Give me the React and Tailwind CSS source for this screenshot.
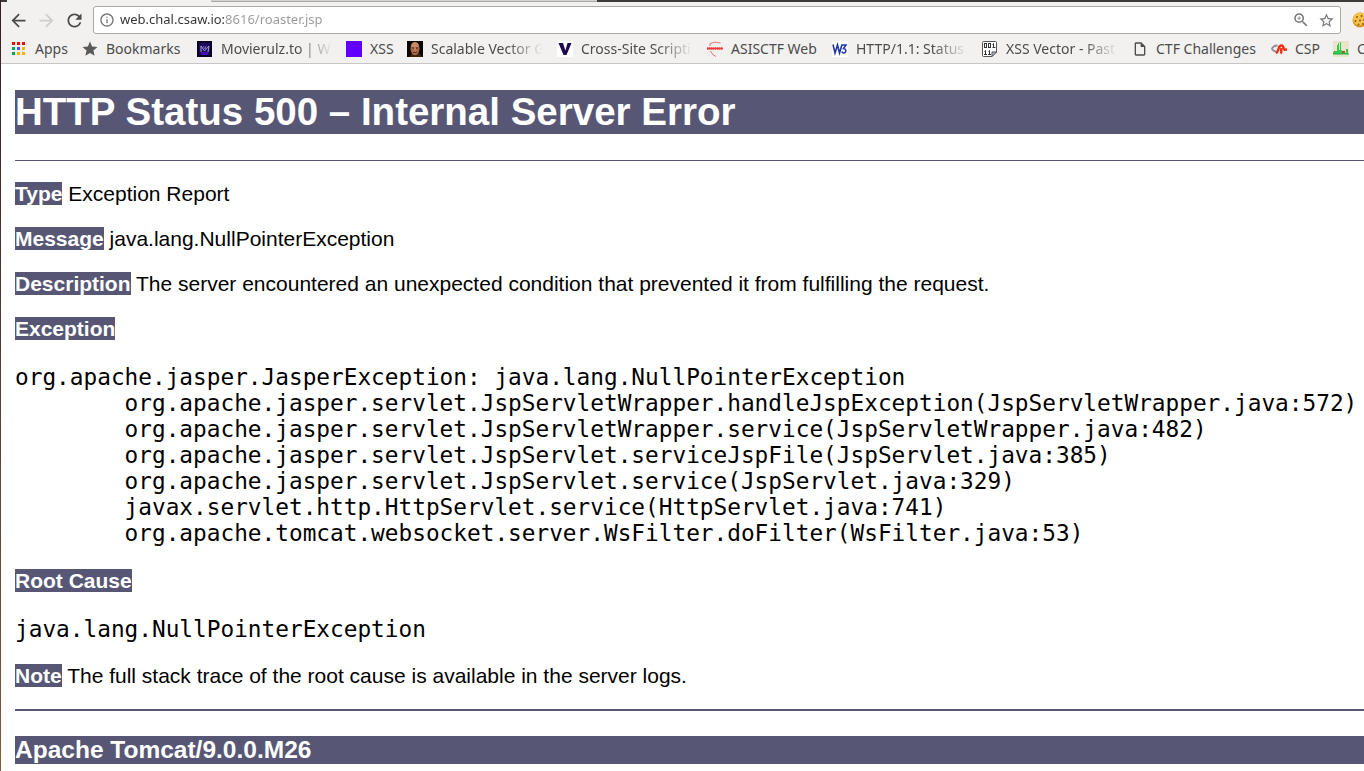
import React from "react";
import {
  MdArrowBack,
  MdArrowForward,
  MdRefresh,
  MdInfoOutline,
  MdZoomIn,
  MdStarBorder,
  MdStar,
  MdOutlineInsertDriveFile,
} from "react-icons/md";

const svg = { width: 16, height: 16, viewBox: "0 0 16 16", "aria-hidden": true };

function AppsIcon() {
  const colors = ["#f50a0a", "#f50a0a", "#f50a0a", "#0fa35a", "#4a55f0", "#f5b400", "#0fa35a", "#f5b400", "#f5b400"];
  return (
    <svg {...svg}>
      {colors.map((c, i) => (
        <rect key={i} x={1 + (i % 3) * 5} y={1 + Math.floor(i / 3) * 5} width="3" height="3" fill={c} />
      ))}
    </svg>
  );
}

function MovieIcon() {
  return (
    <svg {...svg}>
      <rect width="15" height="16" fill="#0b0320" />
      <rect x="2" y="2" width="11" height="12" fill="#1c0a5e" />
      <rect x="4" y="11" width="7" height="3" fill="#3b11b5" />
      <path d="M4 11V5l3.500 5L12 5l-1 6" fill="none" stroke="#a79dcf" />
      <path d="M6 5l2 3 1-3" fill="none" stroke="#7c6ad0" />
    </svg>
  );
}

function SquareIcon() {
  return (
    <svg {...svg}>
      <rect width="16" height="16" fill="#6200ff" />
    </svg>
  );
}

function FaceIcon() {
  return (
    <svg {...svg}>
      <rect width="16" height="16" fill="#0a0503" />
      <path d="M3 15l2-3h7l3 3v1H2z" fill="#3a2410" />
      <ellipse cx="8" cy="7.500" rx="4.500" ry="6.700" fill="#a8694a" />
      <ellipse cx="8" cy="4" rx="3.500" ry="2.500" fill="#c98a68" />
      <path d="M5 7h2M9 7h2" stroke="#4a2416" strokeWidth="1" />
      <path d="M8 7v3" stroke="#d39a78" />
      <path d="M6 11.500h4" stroke="#6a3020" />
    </svg>
  );
}

function VIcon() {
  return (
    <svg {...svg}>
      <rect width="16" height="16" fill="#fff" />
      <path d="M1.500 2H6l2.400 7.500L10.500 2h4L9.500 14H6.500z" fill="#1c0b52" />
    </svg>
  );
}

function DefsecureIcon() {
  return (
    <svg {...svg}>
      <path d="M3 5V2.500Q8 0 13.500 2" fill="none" stroke="#f07070" />
      <path d="M3.500 10Q5 14 9 15.500" fill="none" stroke="#f07070" />
      <path d="M0 7.500h16" stroke="#ee3a3a" strokeWidth="2.600" strokeDasharray="1.600 .4" />
      <path d="M0 7.500h16" stroke="#ee3a3a" strokeWidth="1" />
    </svg>
  );
}

function W3Icon() {
  return (
    <svg {...svg}>
      <rect width="16" height="16" rx="1" fill="#fff" />
      <path d="M1 3.500l2 8.500 2.500-8L7.500 12 10 3.500M5 3.500l1 3" fill="none" stroke="#2038a8" strokeWidth="1.600" />
      <path d="M10 4h4l-2.500 3.500c3 0 3 4.500.3 4.500-1 0-1.800-.8-2-1.500" fill="none" stroke="#2038a8" strokeWidth="1.500" />
    </svg>
  );
}

function BinaryIcon() {
  return (
    <svg {...svg}>
      <path d="M1.500.5h12q1 0 1 1V11L10 15.500H1.500q-1 0-1-1v-13q0-1 1-1z" fill="#fff" stroke="#55555a" />
      <g fill="none" stroke="#333" strokeWidth="1">
        <rect x="2.500" y="2.500" width="2" height="4" />
        <rect x="6.500" y="2.500" width="2" height="4" />
        <path d="M10.500 3.500l1-1v4M10.500 6.500h3M2.500 10.500l1-1v4M2 13.500h3M6.500 10.500l1-1v4M6 13.500h3" />
      </g>
      <path d="M10 15.500V11h4.500z" fill="#b9bccc" stroke="#55555a" />
    </svg>
  );
}

function CspIcon() {
  return (
    <svg {...svg}>
      <path d="M6.500 4.500C3 4.500 1 6.500 1 8S4 9.500 5.500 11.500" fill="none" stroke="#8d8f96" strokeWidth="1.800" />
      <path d="M5 12c3-1 1.500-6 4.500-7.300C13 3.600 12 8 13.500 8.800L16 8.500M9.500 12.500c1.800-1 0-3.500 1-5.500" fill="none" stroke="#f52a10" strokeWidth="2.400" />
    </svg>
  );
}

function ChartIcon() {
  return (
    <svg {...svg}>
      <rect width="16" height="16" fill="#e9e4cc" />
      <path d="M9 10h3v3H9zM1 10h2v2H1z" fill="#c0501a" />
      <path d="M0 13v-2h2v-1h2V4h1V2h1v7h1V1h1v8h1v3h4V8h2v5z" fill="#2ecc50" />
      <path d="M0 13h16" stroke="#27a844" strokeWidth="1" />
    </svg>
  );
}

function CookieIcon() {
  return (
    <svg {...svg}>
      <circle cx="8" cy="8" r="7.500" fill="#d9931c" />
      <circle cx="7.500" cy="7" r="6.500" fill="#f5c24c" />
      <g fill="#8a5210">
        <circle cx="5" cy="5" r=".9" />
        <circle cx="9.500" cy="4" r=".9" />
        <circle cx="3.500" cy="9" r=".9" />
        <circle cx="8" cy="8.500" r="1" />
        <circle cx="12" cy="8" r=".9" />
        <circle cx="6.500" cy="12.500" r=".9" />
        <circle cx="11" cy="12" r=".9" />
      </g>
    </svg>
  );
}

const bookmarks = [
  { label: "Apps", icon: <AppsIcon />, width: "w-[71px]" },
  { label: "Bookmarks", icon: <MdStar size={18} className="shrink-0 text-[#5a5a5a]" />, width: "w-[115px]" },
  { label: "Movierulz.to | W", icon: <MovieIcon />, width: "w-[149px]", fade: true },
  { label: "XSS", icon: <SquareIcon />, width: "w-[61px]" },
  { label: "Scalable Vector G", icon: <FaceIcon />, width: "w-[150px]", fade: true },
  { label: "Cross-Site Scripti", icon: <VIcon />, width: "w-[150px]", fade: true },
  { label: "ASISCTF Web", icon: <DefsecureIcon />, width: "w-[125px]" },
  { label: "HTTP/1.1: Status", icon: <W3Icon />, width: "w-[150px]", fade: true },
  { label: "XSS Vector - Past", icon: <BinaryIcon />, width: "w-[150px]", fade: true },
  { label: "CTF Challenges", icon: <MdOutlineInsertDriveFile size={16} />, width: "w-[139px]" },
  { label: "CSP", icon: <CspIcon />, width: "w-[62px]" },
  { label: "C", icon: <ChartIcon />, width: "w-[71px]" },
];

function Bookmark({ label, icon, width, fade }) {
  return (
    <a href="#" className={`flex shrink-0 items-center gap-2 ${width}`}>
      <span className="flex w-4 shrink-0 justify-center">{icon}</span>
      <span
        className={
          fade
            ? "w-[112px] whitespace-nowrap [mask-image:linear-gradient(to_left,transparent,black_36px)]"
            : "whitespace-nowrap"
        }
      >
        {label}
      </span>
    </a>
  );
}

function BrowserChrome() {
  return (
    <header className="overflow-hidden border-b border-[#c8c6c4] bg-[#f2f1f0] font-['Noto_Sans','Open_Sans',sans-serif]">
      <div className="flex h-[2px]">
        <div className="w-[6px] bg-[#3c3b37]" />
        <div className="w-[204px]" />
        <div className="w-[386px] border-b border-[#a9a8a6] bg-[#d3d2d0]" />
        <div className="flex-1 bg-[#3c3b37]" />
      </div>
      <div className="mt-1 flex h-7 items-center">
        <nav className="flex items-center gap-[7px] pl-[7px] pr-2 text-[#4b4b4b]">
          <button type="button" aria-label="Back"><MdArrowBack size={21} /></button>
          <button type="button" aria-label="Forward" className="text-[#cfcecd]"><MdArrowForward size={21} /></button>
          <button type="button" aria-label="Reload"><MdRefresh size={21} /></button>
        </nav>
        <div className="flex h-7 flex-1 items-center rounded-[3px] border border-[#aaa9a8] bg-white px-[5px] text-[#757575]">
          <MdInfoOutline size={16} />
          <input
            type="text"
            aria-label="Address"
            defaultValue="web.chal.csaw.io:8616/roaster.jsp"
            className="ml-[5px] min-w-0 flex-1 bg-[linear-gradient(to_right,#333_104px,#999_104px)] bg-clip-text text-[13px] text-transparent caret-black outline-none"
          />
          <button type="button" aria-label="Zoom" className="mr-2"><MdZoomIn size={18} /></button>
          <button type="button" aria-label="Bookmark this page"><MdStarBorder size={17} /></button>
        </div>
        <button type="button" aria-label="Cookies" className="-mr-1 ml-[11px] shrink-0"><CookieIcon /></button>
      </div>
      <nav className="flex h-[29px] items-center pl-[10px] text-[14px] text-[#4c4c4c]">
        {bookmarks.map((b) => (
          <Bookmark key={b.label} {...b} />
        ))}
      </nav>
    </header>
  );
}

function Tag({ children }) {
  return <b className="bg-[#575775] font-bold text-white">{children}</b>;
}

const trace = `org.apache.jasper.JasperException: java.lang.NullPointerException
\torg.apache.jasper.servlet.JspServletWrapper.handleJspException(JspServletWrapper.java:572)
\torg.apache.jasper.servlet.JspServletWrapper.service(JspServletWrapper.java:482)
\torg.apache.jasper.servlet.JspServlet.serviceJspFile(JspServlet.java:385)
\torg.apache.jasper.servlet.JspServlet.service(JspServlet.java:329)
\tjavax.servlet.http.HttpServlet.service(HttpServlet.java:741)
\torg.apache.tomcat.websocket.server.WsFilter.doFilter(WsFilter.java:53)`;

const preClass = "my-[1em] font-['DejaVu_Sans_Mono',monospace] text-[13px] leading-[normal] [tab-size:8]";

// The document is shown at the browser's 175% zoom level.
function ErrorReport() {
  return (
    <main className="overflow-hidden pl-2 font-['Liberation_Sans',Arial,sans-serif] text-[12px] leading-[normal] text-black [zoom:1.75]">
      <h1 className="my-[0.67em] bg-[#575775] text-[22px] font-bold leading-[normal] text-white">
        HTTP Status 500 – Internal Server Error
      </h1>
      <hr className="h-px border-0 bg-[#575775]" />
      <p className="my-[1em]"><Tag>Type</Tag> Exception Report</p>
      <p className="my-[1em]"><Tag>Message</Tag> java.lang.NullPointerException</p>
      <p className="my-[1em]">
        <Tag>Description</Tag> The server encountered an unexpected condition that prevented it from fulfilling the request.
      </p>
      <p className="my-[1em]"><Tag>Exception</Tag></p>
      <pre className={preClass}>{trace}</pre>
      <p className="my-[1em]"><Tag>Root Cause</Tag></p>
      <pre className={preClass}>java.lang.NullPointerException</pre>
      <p className="my-[1em]"><Tag>Note</Tag> The full stack trace of the root cause is available in the server logs.</p>
      <hr className="h-px border-0 bg-[#575775]" />
      <h3 className="mt-[1em] bg-[#575775] text-[14px] font-bold leading-[normal] text-white">Apache Tomcat/9.0.0.M26</h3>
    </main>
  );
}

export default function App() {
  return (
    <div className="flex min-h-screen bg-white">
      <div className="w-px shrink-0 bg-linear-to-b from-[#2e2228] to-[#8a5a38]" />
      <div className="min-w-0 flex-1">
        <BrowserChrome />
        <ErrorReport />
      </div>
    </div>
  );
}
